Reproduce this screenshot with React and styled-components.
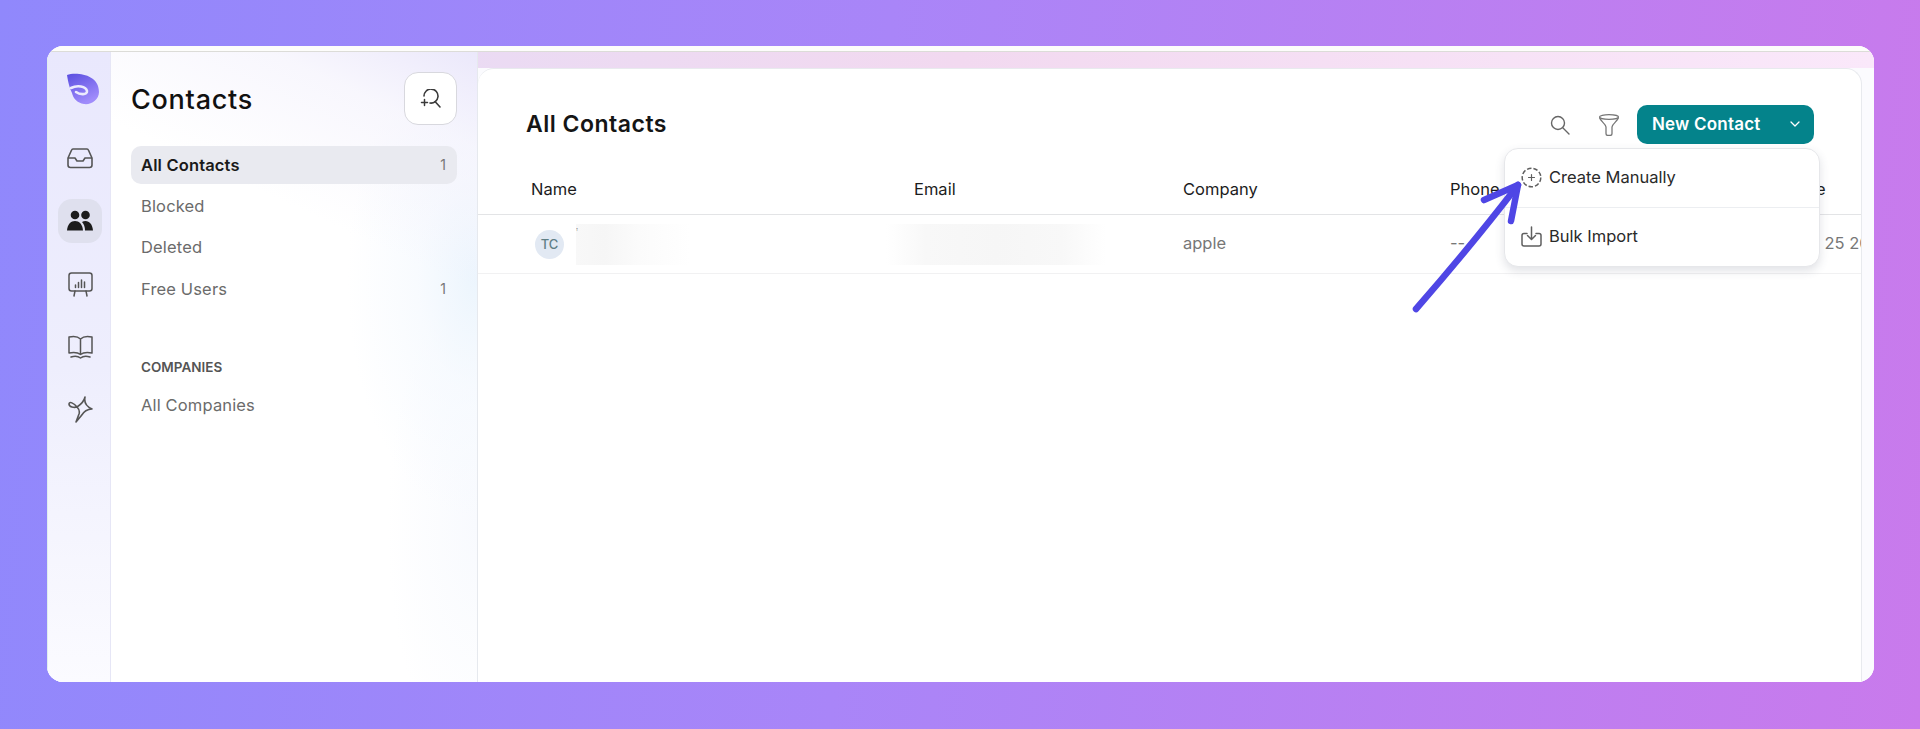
import styled, { createGlobalStyle } from "styled-components";

const GlobalStyle = createGlobalStyle`
  * { box-sizing: border-box; }
  html, body { margin: 0; padding: 0; }
  body { font-family: "Inter", "Noto Sans", sans-serif; }
`;

const LogoIcon = () => (
  <svg width="32" height="32" viewBox="0 0 32 32">
    <defs>
      <linearGradient id="logoFill" x1="0" y1="0" x2="0.5" y2="1">
        <stop offset="0" stopColor="#5a4ee0" />
        <stop offset="1" stopColor="#a08cfb" />
      </linearGradient>
    </defs>
    <path d="M0 2C9-1 32 1 32 19c0 8-8 13-15 12C10 30 6 25 5 20 3 16 1 9 0 2z" fill="url(#logoFill)" />
    <path d="M4 15c6-3 15-2 16 3 .5 4-7 4-11 1" fill="none" stroke="#ecebfd" strokeWidth="2.6" strokeLinecap="round" />
  </svg>
);

const TrayIcon = () => (
  <svg width="26" height="22" viewBox="0 0 26 22" fill="none" stroke="#555" strokeWidth="1.6" strokeLinejoin="round">
    <path d="M6 2h14a1.5 1.5 0 0 1 1.4 1L25 11v7a2.5 2.5 0 0 1-2.5 2.5h-19A2.5 2.5 0 0 1 1 18v-7L4.6 3A1.5 1.5 0 0 1 6 2z" />
    <path d="M1 11h7l2 3h6l2-3h7" />
  </svg>
);

const PeopleIcon = () => (
  <svg width="26" height="22" viewBox="0 0 26 22" fill="#1c1c1c">
    <circle cx="8" cy="5" r="4.3" />
    <circle cx="18.5" cy="5" r="4.3" />
    <path d="M0 20.5C.5 14 4 11 8 11s7.500 3 8 9.500z" />
    <path d="M18 20.500c0-3.500-1-6.500-3-8.500 1-.7 2.300-1 3.500-1 4 0 7 3.500 7.500 9.500z" />
  </svg>
);

const BoardIcon = () => (
  <svg width="25" height="25" viewBox="0 0 25 25" fill="none" stroke="#555" strokeWidth="1.5" strokeLinecap="round" strokeLinejoin="round">
    <rect x="1" y="1" width="23" height="18" rx="2.500" />
    <path d="M7 19l-1 5M18 19l1 5M7.500 13v2.500M10.500 10.500v5M13.500 8v7.500M16.500 10v5.500" />
  </svg>
);

const BookIcon = () => (
  <svg width="25" height="25" viewBox="0 0 25 25" fill="none" stroke="#555" strokeWidth="1.5" strokeLinecap="round" strokeLinejoin="round">
    <path d="M12.500 4C10 1.500 5 1 1 2v16c4-.7 9-.5 11.500 1.500C15 17.500 20 17.300 24 18V2c-4-1-9-.5-11.500 2zM12.500 4v15.500" />
    <path d="M3 22c3-1 7-1 9.500 1 2.500-2 6.500-2 9.500-1" />
  </svg>
);

const SparkIcon = () => (
  <svg width="25" height="28" viewBox="0 0 25 28" fill="none" stroke="#555" strokeWidth="1.6" strokeLinecap="round" strokeLinejoin="round">
    <path d="M17 1c-1 5 0 9 7 12-5 0-8 2-11 7l-5 6 3-8c1-3 0-5-2-7C6 7 1 5 1 8c0 3 5 4 8 3 3-2 7-5 8-10z" />
  </svg>
);

const SearchSparkIcon = () => (
  <svg width="22" height="20" viewBox="0 0 22 20" fill="none" stroke="#3a3a3a" strokeWidth="1.6" strokeLinecap="round">
    <path d="M4 7A7 7 0 1 1 10 14" />
    <path d="M15 12.500l5 5.500" />
    <path d="M4.500 10.500v6M1.500 13.500h6" strokeWidth="1.500" />
  </svg>
);

const SearchIcon = () => (
  <svg width="20" height="20" viewBox="0 0 20 20" fill="none" stroke="#666" strokeWidth="1.4" strokeLinecap="round">
    <circle cx="8" cy="8" r="6.500" />
    <path d="M13 13l6 6" />
  </svg>
);

const FunnelIcon = () => (
  <svg width="22" height="22" viewBox="0 0 22 22" fill="none" stroke="#777" strokeWidth="1.3" strokeLinejoin="round">
    <ellipse cx="11" cy="3" rx="9.500" ry="2.300" />
    <path d="M1.500 3.500c1 4 6.500 6.500 6.500 9.500v6.500a2 2 0 0 0 2 2h2a2 2 0 0 0 2-2V13c0-3 5.500-5.500 6.500-9.500" />
  </svg>
);

const ChevronIcon = () => (
  <svg width="10" height="6" viewBox="0 0 10 6" fill="none" stroke="#fff" strokeWidth="1.3" strokeLinecap="round" strokeLinejoin="round">
    <path d="M1 1l4 4 4-4" />
  </svg>
);

const DashedPlusIcon = () => (
  <svg width="21" height="21" viewBox="0 0 21 21" fill="none" stroke="#5f5f5f" strokeWidth="1.500">
    <circle cx="10.500" cy="10.500" r="9.300" strokeDasharray="4.500 2" />
    <path d="M10.500 7.500v6M7.500 10.500h6" strokeWidth="1.200" strokeLinecap="round" />
  </svg>
);

const ImportIcon = () => (
  <svg width="21" height="21" viewBox="0 0 21 21" fill="none" stroke="#5f5f5f" strokeWidth="1.500" strokeLinecap="round" strokeLinejoin="round">
    <path d="M6 7.500H3a2 2 0 0 0-2 2V18a2 2 0 0 0 2 2h15a2 2 0 0 0 2-2V9.500a2 2 0 0 0-2-2h-3" />
    <path d="M10.500 1v12M6.500 9.500l4 4 4-4" />
  </svg>
);

const railItems = [
  { key: "inbox", icon: <TrayIcon /> },
  { key: "people", icon: <PeopleIcon />, active: true },
  { key: "board", icon: <BoardIcon /> },
  { key: "book", icon: <BookIcon /> },
  { key: "spark", icon: <SparkIcon /> },
];

const navItems = [
  { label: "All Contacts", count: 1, active: true },
  { label: "Blocked" },
  { label: "Deleted" },
  { label: "Free Users", count: 1 },
];

const columns = ["Name", "Email", "Company", "Phone", "Created Date"];

export default function App() {
  return (
    <>
      <GlobalStyle />
      <Page>
        <Window>
          <TopEdge />
          <Body>
            <Rail>
              <LogoSlot>
                <LogoIcon />
              </LogoSlot>
              {railItems.map((item) => (
                <RailButton key={item.key} $active={item.active}>
                  {item.icon}
                </RailButton>
              ))}
            </Rail>
            <Sidebar>
              <SidebarHead>
                <SidebarTitle>Contacts</SidebarTitle>
                <SquareButton>
                  <SearchSparkIcon />
                </SquareButton>
              </SidebarHead>
              <NavList>
                {navItems.map((item) => (
                  <NavItem key={item.label} $active={item.active}>
                    <span>{item.label}</span>
                    {item.count && <NavCount>{item.count}</NavCount>}
                  </NavItem>
                ))}
              </NavList>
              <SectionLabel>COMPANIES</SectionLabel>
              <NavItem>
                <span>All Companies</span>
              </NavItem>
            </Sidebar>
            <MainWrap>
              <Main>
                <MainHead>
                  <MainTitle>All Contacts</MainTitle>
                  <Tools>
                    <ToolIcon>
                      <SearchIcon />
                    </ToolIcon>
                    <ToolIcon>
                      <FunnelIcon />
                    </ToolIcon>
                    <NewButton>
                      <span>New Contact</span>
                      <ChevronIcon />
                    </NewButton>
                  </Tools>
                </MainHead>
                <HeadRow>
                  {columns.map((col) => (
                    <HeadCell key={col}>{col}</HeadCell>
                  ))}
                </HeadRow>
                <Row>
                  <NameCell>
                    <Avatar>TC</Avatar>
                    <RedactedName>T</RedactedName>
                  </NameCell>
                  <EmailCell>
                    <RedactedEmail />
                  </EmailCell>
                  <Cell>apple</Cell>
                  <Cell>--</Cell>
                  <DateCell>Feb 25 2025</DateCell>
                </Row>
                <Menu>
                  <MenuItem>
                    <DashedPlusIcon />
                    <span>Create Manually</span>
                  </MenuItem>
                  <MenuItem>
                    <ImportIcon />
                    <span>Bulk Import</span>
                  </MenuItem>
                </Menu>
              </Main>
            </MainWrap>
          </Body>
        </Window>
        <Arrow width="140" height="160" viewBox="0 0 140 160" fill="none" stroke="#4f46e5" strokeWidth="6.500" strokeLinecap="round" strokeLinejoin="round">
          <path d="M16 139C50 100 85 58 118 15" />
          <path d="M84 30l34-15-7 36" />
        </Arrow>
      </Page>
    </>
  );
}

const Page = styled.div`
  position: relative;
  width: 1920px;
  height: 729px;
  padding: 46px 46px 47px 47px;
  overflow: hidden;
  background: linear-gradient(95deg, #9088fc 0%, #a985f8 45%, #c97aec 100%);
`;

const Window = styled.div`
  width: 100%;
  height: 100%;
  display: flex;
  flex-direction: column;
  border-radius: 16px;
  overflow: hidden;
  background: #fff;
`;

const TopEdge = styled.div`
  height: 6px;
  flex: none;
  background: #fdfdfb;
  border-bottom: 1px solid #dcdcd8;
`;

const Body = styled.div`
  flex: 1;
  min-height: 0;
  display: flex;
  background: linear-gradient(90deg, #e4dcf6 0%, #f2d9f0 50%, #fae8fa 100%);
  background-size: 100% 16px;
  background-repeat: no-repeat;
  background-color: #fbfbfe;
`;

const Rail = styled.nav`
  width: 64px;
  flex: none;
  display: flex;
  flex-direction: column;
  align-items: center;
  gap: 19px;
  padding: 20px 0 0 2px;
  background: linear-gradient(180deg, #e9e8fd 0%, #eeeefd 50%, #fbfbff 100%);
  border-left: 1px solid #dfeeee;
  border-right: 1px solid #e6e6f6;
`;

const LogoSlot = styled.div`
  height: 32px;
  margin: 1px 0 12px 5px;
`;

const RailButton = styled.div`
  width: 44px;
  height: 44px;
  display: flex;
  align-items: center;
  justify-content: center;
  border-radius: 14px;
  background: ${(p) => (p.$active ? "#dfe0ee" : "transparent")};
`;

const Sidebar = styled.aside`
  width: 367px;
  flex: none;
  padding: 20px 20px 0 20px;
  border-right: 1px solid #e6e9ee;
  background:
    linear-gradient(205deg, #ebe8fb 0%, rgba(242, 240, 252, 0.55) 12%, rgba(255, 255, 255, 0) 30%),
    radial-gradient(ellipse 130px 240px at 100% 36%, #ecf5fd 0%, rgba(243, 248, 254, 0.6) 45%, rgba(255, 255, 255, 0) 100%),
    radial-gradient(ellipse 90px 240px at 100% 75%, #f8fafe 0%, rgba(255, 255, 255, 0) 100%),
    #fff;
`;

const SidebarHead = styled.div`
  display: flex;
  align-items: center;
  justify-content: space-between;
  height: 53px;
  margin-bottom: 21px;
`;

const SidebarTitle = styled.h1`
  margin: 0;
  padding-top: 2px;
  font-size: 27px;
  font-weight: 500;
  letter-spacing: 0.75px;
  color: #111;
`;

const SquareButton = styled.div`
  width: 53px;
  height: 53px;
  display: flex;
  align-items: center;
  justify-content: center;
  border: 1px solid #d8d8de;
  border-radius: 14px;
  background: #fff;
`;

const NavList = styled.div`
  display: flex;
  flex-direction: column;
  gap: 3.4px;
`;

const NavItem = styled.div`
  height: 38px;
  display: flex;
  align-items: center;
  justify-content: space-between;
  padding: 0 11px 1px 10px;
  border-radius: 10px;
  font-size: 16.5px;
  letter-spacing: 0.15px;
  font-weight: ${(p) => (p.$active ? 600 : 400)};
  color: ${(p) => (p.$active ? "#1a1a1a" : "#6b6b6b")};
  background: ${(p) => (p.$active ? "#e9eaf0" : "transparent")};
`;

const NavCount = styled.span`
  font-size: 14px;
  font-weight: 400;
  color: #777;
`;

const SectionLabel = styled.div`
  margin: 51px 0 11px 10px;
  font-size: 13.5px;
  line-height: 16px;
  font-weight: 600;
  color: #555;
`;

const MainWrap = styled.div`
  flex: 1;
  min-width: 0;
  padding: 16px 12px 0 0;
`;

const Main = styled.main`
  position: relative;
  height: 100%;
  overflow: hidden;
  background: #fff;
  border: 1px solid #e8eaee;
  border-bottom: none;
  border-left: none;
  border-radius: 16px 16px 0 0;
`;

const MainHead = styled.div`
  display: flex;
  align-items: center;
  justify-content: space-between;
  height: 39px;
  margin: 36px 47px 0 48px;
`;

const MainTitle = styled.h2`
  margin: 0;
  padding-bottom: 1px;
  font-size: 23px;
  font-weight: 600;
  letter-spacing: 0.5px;
  color: #151515;
`;

const Tools = styled.div`
  display: flex;
  align-items: center;
`;

const ToolIcon = styled.div`
  width: 49px;
  display: flex;
  justify-content: center;
`;

const NewButton = styled.div`
  width: 177px;
  height: 39px;
  margin-left: 4px;
  display: flex;
  align-items: center;
  justify-content: space-between;
  padding: 0 14px 1px 15px;
  border-radius: 10px;
  background: #04838b;
  color: #fff;
  font-size: 17px;
  letter-spacing: 0.2px;
  font-weight: 600;
`;

const tableGrid = `
  display: grid;
  grid-template-columns: 383px 269px 267px 273px 1fr;
  padding-left: 53px;
  white-space: nowrap;
`;

const HeadRow = styled.div`
  ${tableGrid}
  height: 50px;
  margin-top: 21px;
  padding-bottom: 2px;
  align-items: center;
  border-bottom: 1px solid #e3e4e6;
`;

const HeadCell = styled.div`
  font-size: 16.5px;
  font-weight: 400;
  color: #1c1c1c;
`;

const Row = styled.div`
  ${tableGrid}
  height: 59px;
  align-items: center;
  border-bottom: 1px solid #f1f1f2;
`;

const Cell = styled.div`
  font-size: 16.5px;
  color: #777;
  padding-bottom: 2px;
`;

const NameCell = styled.div`
  display: flex;
  align-items: center;
  gap: 12px;
  padding-left: 4px;
`;

const EmailCell = styled.div`
  margin-left: -28px;
`;

const DateCell = styled(Cell)`
  padding-left: 68px;
`;

const Avatar = styled.div`
  width: 29px;
  height: 29px;
  flex: none;
  display: flex;
  align-items: center;
  justify-content: center;
  border-radius: 50%;
  background: #e2e9f3;
  color: #5f7f86;
  font-size: 13px;
  font-weight: 500;
`;

const RedactedName = styled.div`
  width: 114px;
  height: 41px;
  overflow: hidden;
  padding-top: 4px;
  font-size: 3px;
  color: #333;
  background: linear-gradient(90deg, #f8f8f8 0%, #f6f6f6 25%, #fbfbfb 55%, #ffffff 100%);
`;

const RedactedEmail = styled.div`
  width: 220px;
  height: 41px;
  background: linear-gradient(90deg, #ffffff 0%, #f8f8f8 18%, #f6f6f6 50%, #f8f8f8 80%, #ffffff 100%);
`;

const Menu = styled.div`
  position: absolute;
  top: 79px;
  right: 41px;
  width: 316px;
  height: 119px;
  display: flex;
  flex-direction: column;
  background: #fff;
  border: 1px solid #e6e7ea;
  border-radius: 14px;
  box-shadow: 0 4px 10px rgba(70, 75, 100, 0.16);
`;

const MenuItem = styled.div`
  flex: 1;
  display: flex;
  align-items: center;
  gap: 7px;
  padding: 0 0 2px 16px;
  font-size: 16.5px;
  color: #2a2a2a;

  & + & {
    border-top: 1px solid #eceef1;
  }
`;

const Arrow = styled.svg`
  position: absolute;
  left: 1400px;
  top: 170px;
`;
